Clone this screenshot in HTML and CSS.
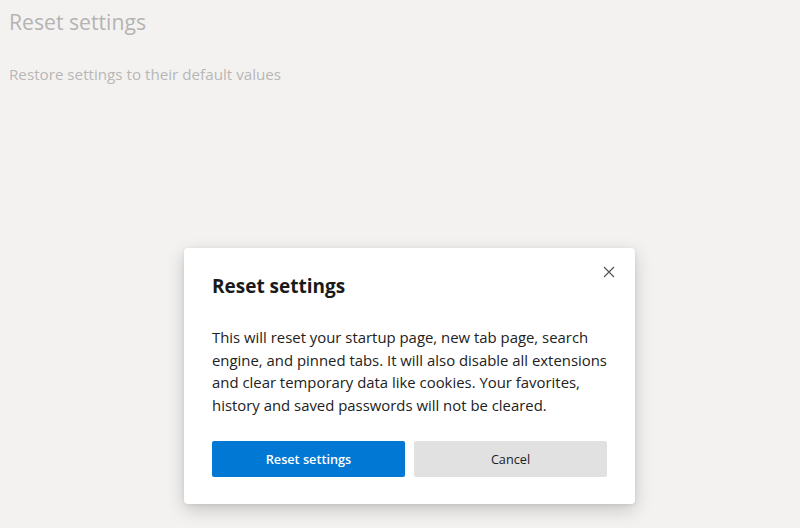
FILE: index.html
```html
<!DOCTYPE html>
<html lang="en">
<head>
<meta charset="utf-8">
<title>Reset settings</title>
<link rel="stylesheet" href="styles.css">
</head>
<body>
<main class="page">
  <h1 class="page-title">Reset settings</h1>
  <p class="page-row">Restore settings to their default values</p>
</main>
<div class="overlay">
  <div class="dialog" role="dialog" aria-labelledby="dlg-title">
    <button class="close" aria-label="Close">
      <svg width="12" height="12" viewBox="0 0 12 12"><path d="M1 1L11 11M11 1L1 11" stroke="#555" stroke-width="1.2" fill="none"/></svg>
    </button>
    <h2 class="dialog-title" id="dlg-title">Reset settings</h2>
    <p class="dialog-body">This will reset your startup page, new tab page, search engine, and pinned tabs. It will also disable all extensions and clear temporary data like cookies. Your favorites, history and saved passwords will not be cleared.</p>
    <div class="actions">
      <button class="btn btn-primary">Reset settings</button>
      <button class="btn btn-secondary">Cancel</button>
    </div>
  </div>
</div>
</body>
</html>
```
FILE: styles.css
```css
html, body {
  margin: 0;
  padding: 0;
  height: 100%;
}
body {
  background: #f3f2f1;
  font-family: "Open Sans", "Noto Sans", sans-serif;
  overflow: hidden;
}
.page {
  padding: 6px 9px;
}
.page-title {
  margin: 0;
  font-size: 21.2px;
  font-weight: 400;
  color: #b5b4b3;
  line-height: 32px;
}
.page-row {
  margin: 26px 0 0;
  font-size: 15.2px;
  color: #b8b7b6;
}
.overlay {
  position: absolute;
  inset: 0;
}
.dialog {
  position: absolute;
  left: 184px;
  top: 248px;
  width: 395px;
  padding: 24px 28px 27px;
  background: #fff;
  border-radius: 4px;
  box-shadow: 0 6px 18px rgba(0,0,0,0.18), 0 1px 4px rgba(0,0,0,0.08);
}
.close {
  position: absolute;
  top: 16px;
  right: 18px;
  width: 16px;
  height: 16px;
  padding: 0;
  border: 0;
  background: transparent;
  display: flex;
  align-items: center;
  justify-content: center;
}
.dialog-title {
  margin: 0;
  font-size: 19px;
  font-weight: 700;
  color: #1a1a1a;
  line-height: 28px;
}
.dialog-body {
  margin: 26px 0 0;
  font-size: 14.9px;
  line-height: 22.7px;
  color: #222;
}
.actions {
  display: flex;
  gap: 9px;
  margin-top: 24px;
}
.btn {
  flex: 1;
  height: 36px;
  border: 0;
  border-radius: 2px;
  font-family: inherit;
  font-size: 12.7px;
}
.btn-primary {
  background: #0078d4;
  color: #fff;
  font-weight: 600;
}
.btn-secondary {
  background: #e1e1e1;
  color: #222;
}
```
